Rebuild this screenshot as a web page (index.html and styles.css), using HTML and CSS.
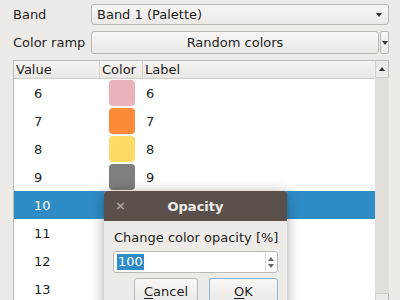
FILE: index.html
```html
<!DOCTYPE html>
<html>
<head>
<meta charset="utf-8">
<link rel="stylesheet" href="styles.css">
</head>
<body>
<div class="form">
  <label class="lbl">Band</label>
  <div class="combo"><span>Band 1 (Palette)</span><span class="arrow"></span></div>
  <label class="lbl">Color ramp</label>
  <div class="ramp">
    <div class="btn ramp-btn">Random colors</div>
    <div class="btn drop"><span class="arrow"></span></div>
  </div>
</div>
<div class="table">
  <div class="grid">
    <div class="head">
      <div class="hc c1">Value</div>
      <div class="hc c2">Color</div>
      <div class="hc c3">Label</div>
    </div>
    <div class="row"><div class="c1">6</div><div class="c2"><span class="sw" style="background:#e9b3b9"></span></div><div class="c3">6</div></div>
    <div class="row"><div class="c1">7</div><div class="c2"><span class="sw" style="background:#fd8a37"></span></div><div class="c3">7</div></div>
    <div class="row"><div class="c1">8</div><div class="c2"><span class="sw" style="background:#fedc66"></span></div><div class="c3">8</div></div>
    <div class="row"><div class="c1">9</div><div class="c2"><span class="sw" style="background:#7f7f7f"></span></div><div class="c3">9</div></div>
    <div class="row sel"><div class="c1">10</div><div class="c2"></div><div class="c3"></div></div>
    <div class="row"><div class="c1">11</div><div class="c2"></div><div class="c3"></div></div>
    <div class="row"><div class="c1">12</div><div class="c2"></div><div class="c3"></div></div>
    <div class="row"><div class="c1">13</div><div class="c2"></div><div class="c3"></div></div>
  </div>
  <div class="vscroll">
    <div class="sbtn"><span class="up"></span></div>
    <div class="slider"></div>
    <div class="sbtn"><span class="dn"></span></div>
  </div>
</div>
<div class="dialog">
  <div class="title"><span class="x">×</span><span class="tt">Opacity</span></div>
  <div class="dbody">
    <div class="dlabel">Change color opacity [%]</div>
    <div class="spin"><span class="selv">100</span><span class="spinarrows"><span class="up"></span><span class="dn"></span></span></div>
    <div class="btns">
      <div class="pbtn cancel"><u>C</u>ancel</div>
      <div class="pbtn ok"><u>O</u>K</div>
    </div>
  </div>
</div>
</body>
</html>
```
FILE: styles.css
```css
* { box-sizing: border-box; }
html, body { margin: 0; height: 300px; overflow: hidden; }
body {
  background: #edebe8;
  font-family: "DejaVu Sans", sans-serif;
  font-size: 13px;
  color: #1e1e1e;
  padding: 4px 11px 0 13px;
  position: relative;
}
.form {
  display: grid;
  grid-template-columns: 78px 1fr;
  row-gap: 6px;
  align-items: center;
}
.lbl { line-height: 16px; }
.combo {
  height: 21px;
  border: 1px solid #bbb7b1;
  border-radius: 3px;
  background: linear-gradient(#f8f7f6, #ebe9e6);
  display: flex;
  align-items: center;
  justify-content: space-between;
  padding: 0 6px 0 5px;
}
.arrow {
  width: 0; height: 0;
  border-left: 3.5px solid transparent;
  border-right: 3.5px solid transparent;
  border-top: 4px solid #333;
}
.ramp { display: flex; height: 23px; gap: 1px; }
.btn {
  border: 1px solid #bbb7b1;
  border-radius: 3px;
  background: linear-gradient(#f8f7f6, #ebe9e6);
  display: flex;
  align-items: center;
  justify-content: center;
}
.ramp-btn { flex: 1; }
.drop { width: 9px; border-radius: 2px; }
.table {
  margin-top: 6px;
  height: 250px;
  border: 1px solid #bdb9b3;
  border-bottom: none;
  background: #fff;
  display: flex;
}
.grid { flex: 1; }
.head {
  display: grid;
  grid-template-columns: 86px 43px 1fr;
  height: 18px;
  background: linear-gradient(#f6f5f3, #eae8e5);
  border-bottom: 1px solid #cfcbc6;
}
.hc {
  line-height: 17px;
  padding-left: 2px;
  border-right: 1px solid #d3cfca;
}
.hc.c3 { border-right: none; padding-left: 2px; }
.row {
  display: grid;
  grid-template-columns: 86px 43px 1fr;
  height: 28px;
  align-items: center;
}
.row .c1 { padding-left: 20px; }
.row .c2 { display: flex; justify-content: center; }
.row .c3 { padding-left: 3px; }
.sw { width: 26px; height: 26px; border-radius: 4px; display: block; }
.row.sel { background: #308cc6; color: #fff; }
.vscroll {
  width: 13px;
  border-left: 1px solid #d3cfca;
  background: #edebe8;
  display: flex;
  flex-direction: column;
}
.sbtn { height: 16px; display: flex; align-items: center; justify-content: center; }
.slider {
  flex: 1;
  background: #e2dfdb;
  border-top: 1px solid #cfcbc6;
  border-bottom: 1px solid #cfcbc6;
  margin: 0 -1px;
}
.up, .dn { width: 0; height: 0; border-left: 3.5px solid transparent; border-right: 3.5px solid transparent; display: block; }
.up { border-bottom: 4px solid #333; }
.dn { border-top: 4px solid #333; }
.dialog {
  position: absolute;
  left: 104px;
  top: 191px;
  width: 183px;
  height: 130px;
  background: #edebe8;
  box-shadow: 0 2px 14px rgba(0,0,0,0.35);
  border-radius: 3px 3px 0 0;
}
.title {
  height: 30px;
  background: #59504b;
  border-radius: 3px 3px 0 0;
  position: relative;
  display: flex;
  align-items: center;
  justify-content: center;
}
.x {
  position: absolute;
  left: 11px;
  top: 7px;
  color: #aaa39d;
  font-size: 13px;
  font-weight: bold;
}
.tt { color: #eeebe8; font-weight: bold; font-size: 13px; }
.dbody { padding: 9px 9px 0 9px; }
.dlabel { line-height: 16px; padding-left: 1px; white-space: nowrap; }
.spin {
  margin-top: 5px;
  height: 22px;
  border: 1px solid #bbb7b1;
  border-radius: 3px;
  background: #fff;
  display: flex;
  align-items: center;
  justify-content: space-between;
  padding: 0 3px 0 3px;
}
.selv { background: #308cc6; color: #fff; line-height: 16px; padding: 0 1px; }
.spinarrows {
  display: flex;
  flex-direction: column;
  gap: 3px;
  align-items: center;
  border-left: 1px solid #e4e1dd;
  padding-left: 2px;
  height: 18px;
  justify-content: center;
}
.spinarrows .up { border-bottom-color: #666; }
.spinarrows .dn { border-top-color: #666; }
.btns { display: flex; justify-content: flex-end; gap: 11px; margin-top: 5px; }
.pbtn {
  height: 26px;
  border: 1px solid #bbb7b1;
  border-radius: 3px;
  background: linear-gradient(#f8f7f6, #ebe9e6);
  display: flex;
  align-items: center;
  justify-content: center;
}
.cancel { width: 64px; }
.ok { width: 69px; border-color: #8fb2d3; }
u { text-decoration-thickness: 1px; text-underline-offset: 2px; }
```
